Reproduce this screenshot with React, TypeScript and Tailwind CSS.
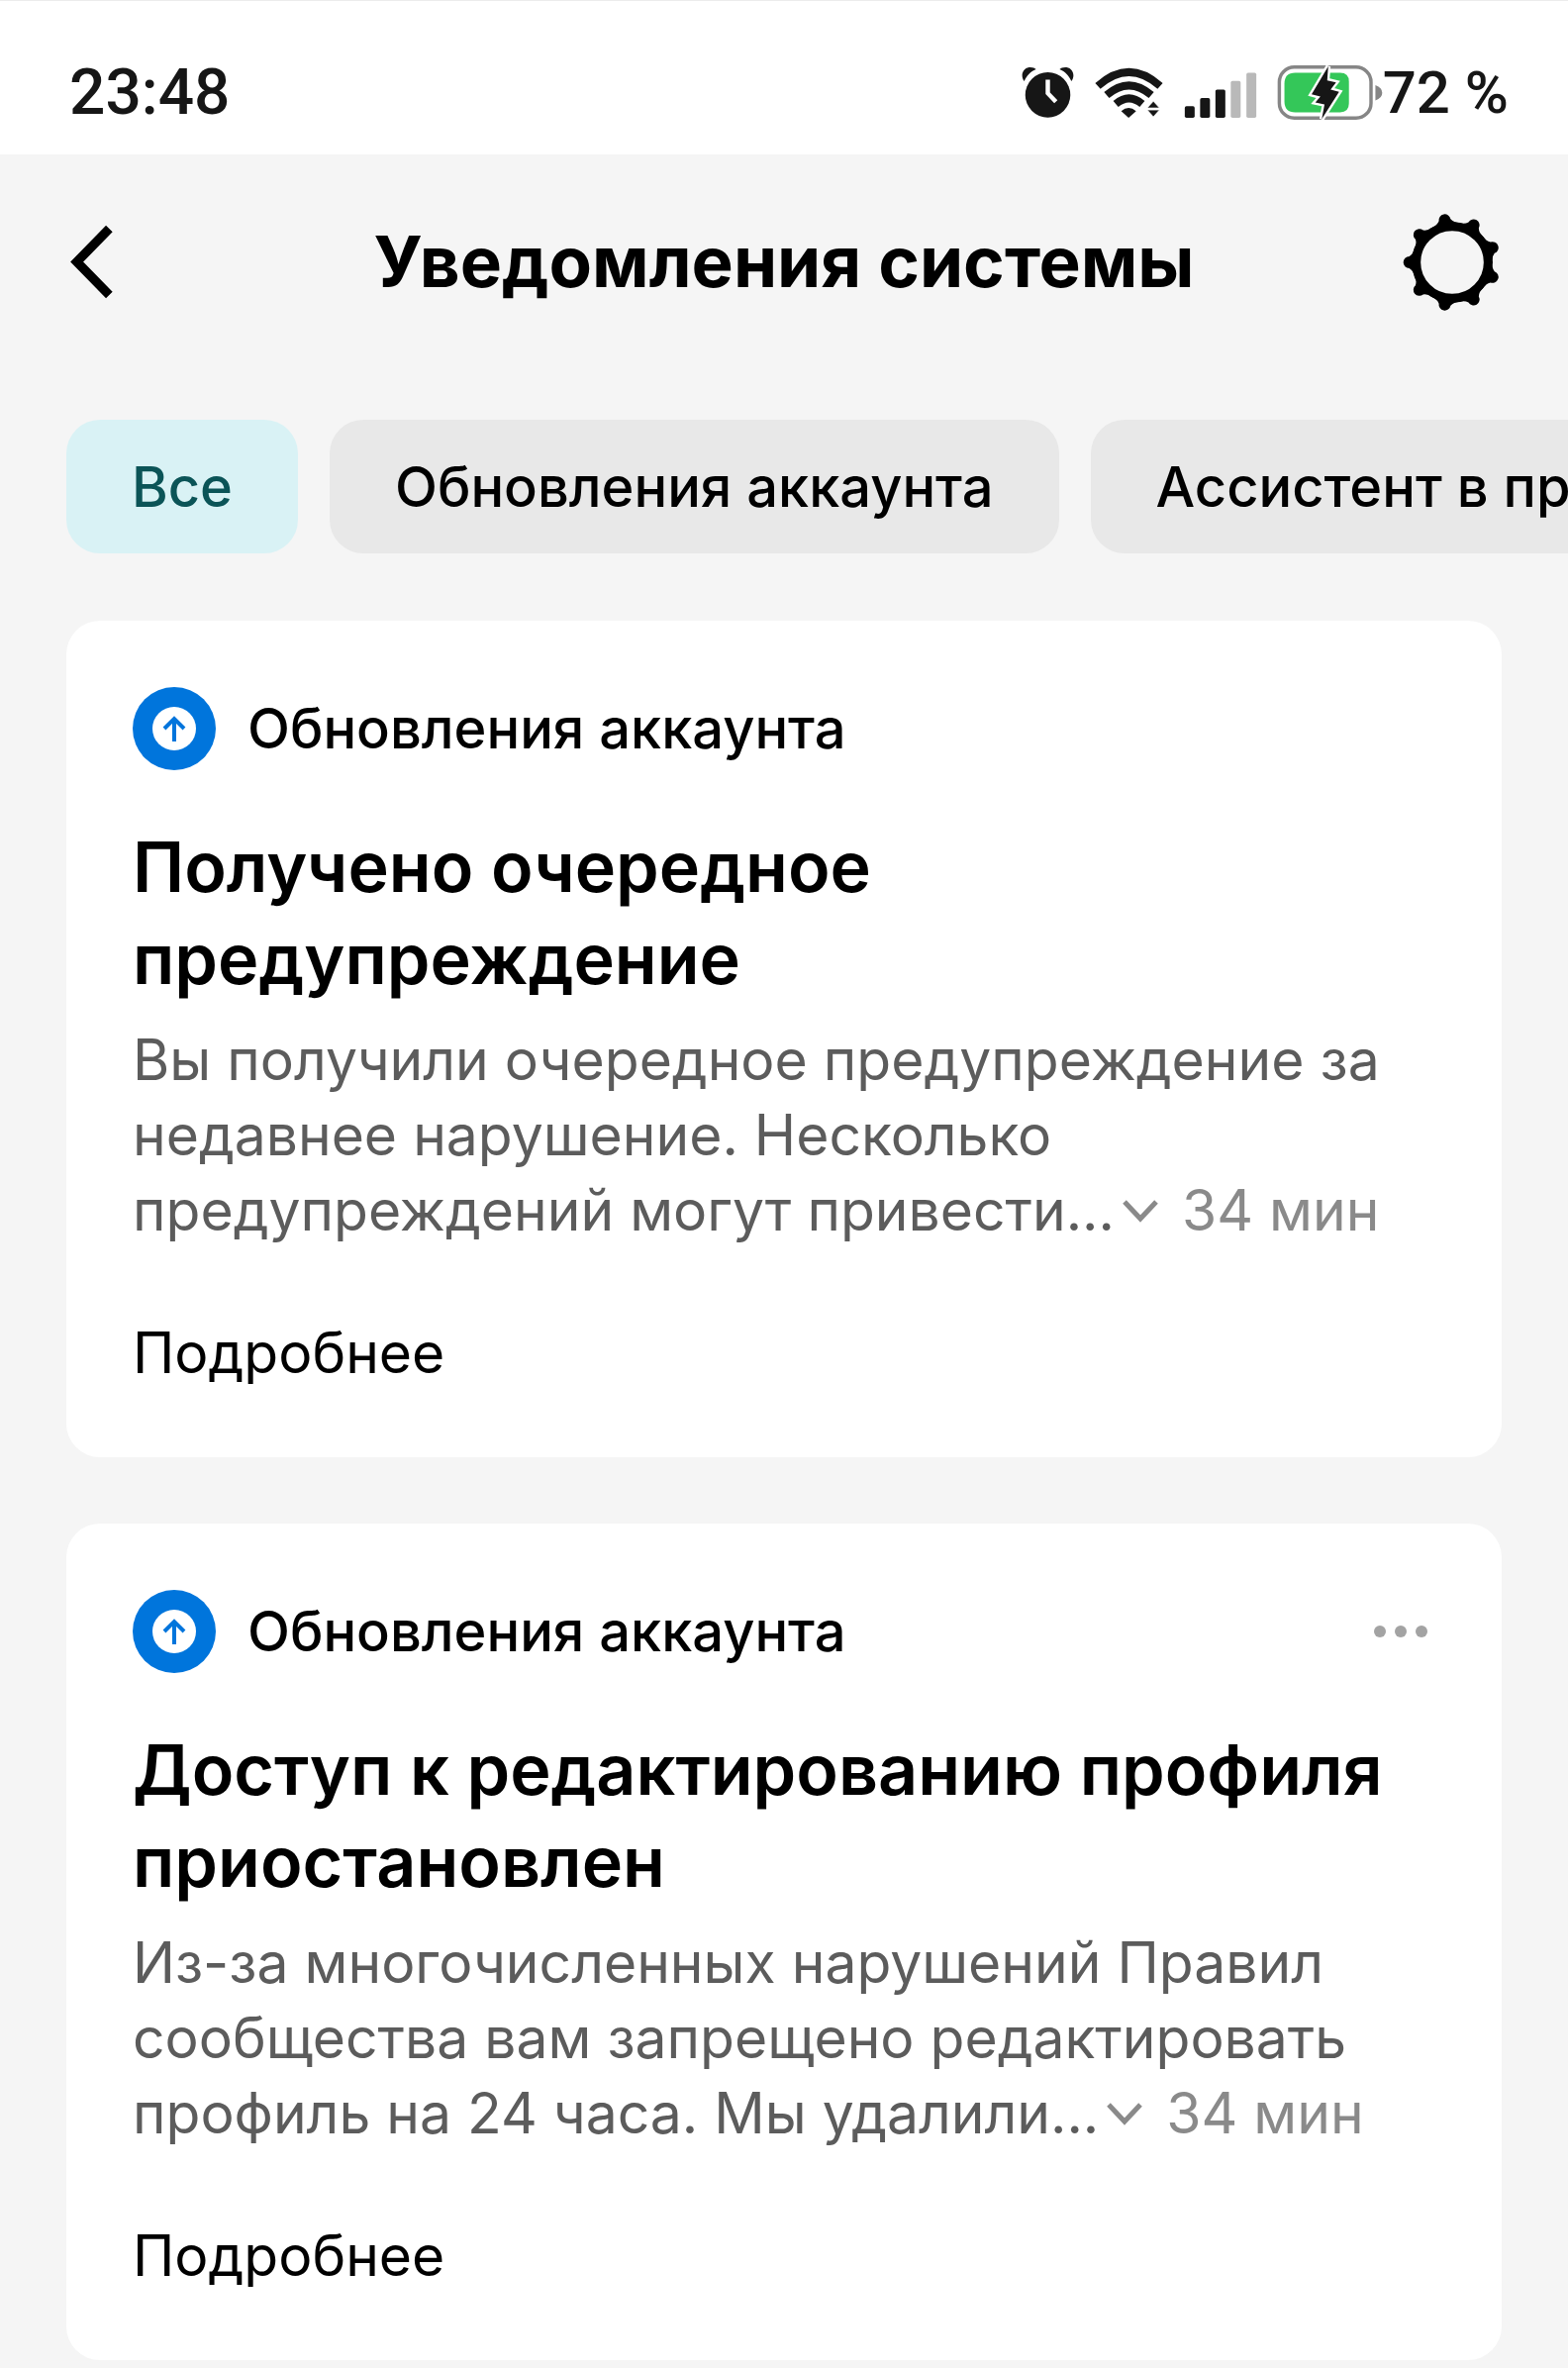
import { useState } from "react";

type Notice = {
  id: number;
  title: string[];
  body: string[];
  time: string;
  hasMenu: boolean;
};

const filters = ["Все", "Обновления аккаунта", "Ассистент в пр"];

const notices: Notice[] = [
  {
    id: 1,
    title: ["Получено очередное", "предупреждение"],
    body: [
      "Вы получили очередное предупреждение за",
      "недавнее нарушение. Несколько",
      "предупреждений могут привести...",
    ],
    time: "34 мин",
    hasMenu: false,
  },
  {
    id: 2,
    title: ["Доступ к редактированию профиля", "приостановлен"],
    body: [
      "Из-за многочисленных нарушений Правил",
      "сообщества вам запрещено редактировать",
      "профиль на 24 часа. Мы удалили...",
    ],
    time: "34 мин",
    hasMenu: true,
  },
];

function AlarmIcon() {
  return (
    <svg viewBox="76 82 156 154" className="h-[53px] w-[53px]" aria-hidden="true">
      <circle cx="154" cy="166" r="67" fill="#161616" />
      <path d="M84 125C72 110 78 88 98 84C108 83 115 86 119 90C102 97 92 108 84 125Z" fill="#161616" />
      <path d="M224 125C236 110 230 88 210 84C200 83 193 86 189 90C206 97 216 108 224 125Z" fill="#161616" />
      <path d="M154 121V161L178 186" fill="none" stroke="#fff" strokeWidth="13" />
    </svg>
  );
}

function WifiIcon() {
  return (
    <svg viewBox="284 76 206 152" className="h-[52px] w-[71px]" aria-hidden="true">
      <g fill="none" stroke="#161616" strokeWidth="23">
        <path d="M295 131Q387 49 479 131" />
        <path d="M321 158Q387 101 453 158" />
        <path d="M348 184Q387 151 426 184" />
      </g>
      <path d="M386 225L364 205Q386 186 408 205Z" fill="#161616" />
      <path d="M459 176L477 196H441ZM459 222L477 202H441Z" fill="#161616" stroke="#fff" strokeWidth="2" />
    </svg>
  );
}

function SignalIcon() {
  return (
    <svg viewBox="545 76 214 154" className="h-[53px] w-[74px]" aria-hidden="true">
      <rect x="547" y="193" width="29" height="34" rx="5" fill="#161616" />
      <rect x="592" y="169" width="29" height="58" rx="5" fill="#161616" />
      <rect x="637" y="144" width="29" height="83" rx="5" fill="#161616" />
      <rect x="682" y="119" width="29" height="108" rx="5" fill="#b9b9b9" />
      <rect x="728" y="95" width="29" height="132" rx="5" fill="#b9b9b9" />
    </svg>
  );
}

function BatteryIcon() {
  return (
    <svg viewBox="816 72 312 166" className="h-[57px] w-[107px]" aria-hidden="true">
      <rect x="823" y="80" width="270" height="150" rx="44" fill="#fff" stroke="#868686" strokeWidth="10" />
      <path d="M1106 133Q1126 140 1126 156T1106 178Z" fill="#868686" />
      <path
        d="M870 97H1002Q1028 97 1028 123V187Q1028 213 1002 213H870Q838 213 838 181V129Q838 97 870 97Z"
        fill="#34c759"
      />
      <path
        d="M967 78L918 160L944 167L929 184L956 190L948 233L999 153L974 146L990 125L964 119Z"
        fill="#161616"
        stroke="#fff"
        strokeWidth="14"
        paintOrder="stroke"
      />
    </svg>
  );
}

function BackIcon() {
  return (
    <svg viewBox="90 111 130 224" className="h-[75px] w-[43px]" aria-hidden="true">
      <path d="M209 122L110 223L209 324" fill="none" stroke="#000" strokeWidth="28" />
    </svg>
  );
}

const teeth = [0, 40, 80, 120, 160, 200, 240, 280, 320];

function GearIcon() {
  return (
    <svg viewBox="-150 -150 300 300" className="size-[100px]" aria-hidden="true">
      <circle r="109" fill="none" stroke="#000" strokeWidth="27" />
      {teeth.map((angle) => (
        <path
          key={angle}
          d="M-106 -48L-113 -44Q-118 -25 -130 -18A18 18 0 0 0 -130 18Q-118 25 -113 44L-106 48Z"
          transform={`rotate(${angle})`}
        />
      ))}
    </svg>
  );
}

function UpdateIcon() {
  return (
    <svg viewBox="0 0 84 84" className="size-[84px] shrink-0" aria-hidden="true">
      <circle cx="42" cy="42" r="42" fill="#0075dc" />
      <circle cx="42" cy="42" r="22" fill="#fff" />
      <path d="M42 55V32M32 42L42 32L52 42" fill="none" stroke="#0075dc" strokeWidth="4" />
    </svg>
  );
}

function StatusBar() {
  return (
    <div className="flex h-[156px] items-center justify-between border-t border-[#ececec] bg-white pr-[60px] pl-[70px] pt-[30px] font-[Roboto,sans-serif] text-[64px] leading-none font-medium text-[#161616]">
      <span>23:48</span>
      <div className="flex items-center gap-5">
        <AlarmIcon />
        <WifiIcon />
        <SignalIcon />
        <div className="flex items-center">
          <BatteryIcon />
          <span className="text-[60px]">72 %</span>
        </div>
      </div>
    </div>
  );
}

function NoticeCard({ notice }: { notice: Notice }) {
  return (
    <article className="rounded-[34px] bg-white p-[67px]">
      <div className="flex h-[84px] items-center gap-8">
        <UpdateIcon />
        <span className="text-[56px] leading-none font-medium">Обновления аккаунта</span>
        {notice.hasMenu && (
          <button type="button" aria-label="Меню" className="ml-auto p-2">
            <svg viewBox="0 0 54 12" className="h-3 w-[54px]" fill="#a3a3a3">
              <circle cx="6" cy="6" r="6" />
              <circle cx="27" cy="6" r="6" />
              <circle cx="48" cy="6" r="6" />
            </svg>
          </button>
        )}
      </div>
      <h2 className="mt-[51px] text-[70px] leading-[93px] font-semibold">
        {notice.title.map((line) => (
          <span key={line} className="block whitespace-nowrap">
            {line}
          </span>
        ))}
      </h2>
      <p className="mt-[18px] text-[57px] leading-[76px] text-[#5c5c5c]">
        {notice.body.map((line, i) => (
          <span key={line} className="block whitespace-nowrap">
            {line}
            {i === notice.body.length - 1 && (
              <span className="text-[#8a8a8a]">
                <svg viewBox="0 0 36 32" className="mr-6 ml-2 inline h-8 w-9 align-baseline" aria-hidden="true">
                  <path d="M2 3L18 20L34 3" fill="none" stroke="#8a8a8a" strokeWidth="5" />
                </svg>
                {notice.time}
              </span>
            )}
          </span>
        ))}
      </p>
      <a href="#" className="mt-[68px] block text-[57px] leading-[76px]">
        Подробнее
      </a>
    </article>
  );
}

export default function App() {
  const [active, setActive] = useState(filters[0]);

  return (
    <div className="min-h-screen overflow-hidden bg-[#f5f5f5] pb-2 font-[Inter,sans-serif] text-black">
      <StatusBar />
      <header className="flex h-[217px] items-center justify-between px-[67px]">
        <button type="button" aria-label="Назад" className="w-[100px] pl-1">
          <BackIcon />
        </button>
        <h1 className="text-[71px] leading-none font-bold">Уведомления системы</h1>
        <button type="button" aria-label="Настройки">
          <GearIcon />
        </button>
      </header>
      <nav className="mt-[51px] flex gap-8 overflow-hidden pl-[67px]">
        {filters.map((name) => (
          <button
            key={name}
            type="button"
            onClick={() => setActive(name)}
            className={`h-[135px] shrink-0 rounded-[34px] px-[66px] text-[56px] leading-none font-medium ${name === active ? "bg-[#d9f2f5] text-[#0b5457]" : "bg-[#e8e8e8]"}`}
          >
            {name}
          </button>
        ))}
      </nav>
      <main className="mt-[68px] flex flex-col gap-[67px] px-[67px]">
        {notices.map((notice) => (
          <NoticeCard key={notice.id} notice={notice} />
        ))}
      </main>
    </div>
  );
}
